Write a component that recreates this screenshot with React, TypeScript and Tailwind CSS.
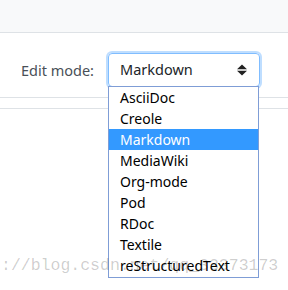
import { useState } from 'react'

const modes = ['AsciiDoc', 'Creole', 'Markdown', 'MediaWiki', 'Org-mode', 'Pod', 'RDoc', 'Textile', 'reStructuredText']

export default function App() {
  const [mode, setMode] = useState('Markdown')

  return (
    <div className="relative w-[288px] h-[290px] overflow-hidden bg-white font-['Segoe_UI','Noto_Sans',sans-serif]">
      {/* top bar */}
      <div className="h-[33px] bg-[#f8f9fa] border-b border-[#dee2e6]" />

      {/* toolbar row */}
      <div className="h-[65px] border-b border-[#dee2e6] flex items-start pt-[20px]">
        <label className="w-[94px] text-right text-[14.5px] leading-[34px] text-[#495057]">Edit mode:</label>
        <div className="ml-[14px] w-[152px] h-[34px] flex items-center justify-between pl-[11px] pr-[12px] border border-[#80bdff] rounded-[4px] shadow-[0_0_0_2px_rgba(0,123,255,0.25)] text-[14.5px] text-[#212529]">
          <span>{mode}</span>
          <svg width="10" height="12" viewBox="0 0 10 12" className="text-[#222]">
            <path d="M5 0.5 L10 5.2 H0 Z M0 6.8 H10 L5 11.5 Z" fill="currentColor" />
          </svg>
        </div>
      </div>
      <div className="h-[11px] border-b border-[#dee2e6]" />

      {/* open listbox */}
      <ul className="absolute left-[108px] top-[86px] w-[151px] bg-white border border-[#7f9dd6] pb-[1px]">
        {modes.map((m) => (
          <li
            key={m}
            onClick={() => setMode(m)}
            className={`h-[21px] pl-[11px] text-[14px] leading-[21px] ${
              m === mode ? 'bg-[#3399ff] text-white' : 'text-black'
            }`}
          >
            {m}
          </li>
        ))}
      </ul>

      {/* watermark */}
      <div className="pointer-events-none absolute left-[1px] top-[255px] font-['Liberation_Mono',monospace] text-[16.5px] leading-[22px] text-black/20 whitespace-nowrap">
        ://blog.csdn.net/qq_33373173
      </div>
    </div>
  )
}
